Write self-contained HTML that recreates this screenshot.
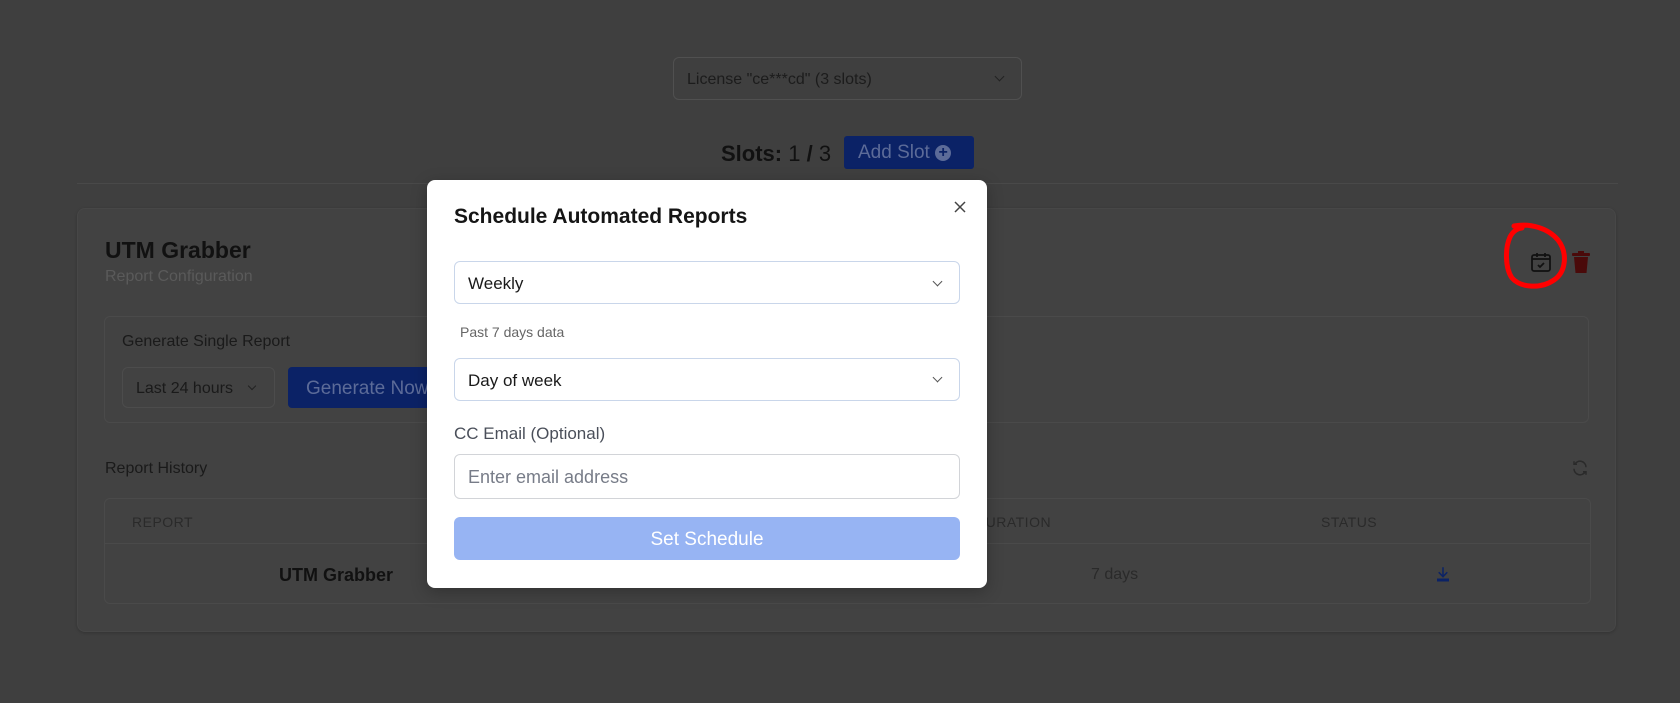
<!DOCTYPE html>
<html><head><meta charset="utf-8"><style>
*{box-sizing:border-box;margin:0;padding:0}
body{width:1680px;height:703px;background:#3f3f3f;font-family:"Liberation Sans",sans-serif;position:relative;overflow:hidden;color:#1a1a1a}
.a{position:absolute}
.sel{position:absolute;border:1px solid #4c4c4c;border-radius:6px}
.chev{position:absolute;width:7px;height:7px;border-right:1.5px solid;border-bottom:1.5px solid;transform:rotate(45deg)}
</style></head><body>
<div class="sel" style="left:673px;top:57px;width:349px;height:43px;border-color:#505050"></div>
<div class="a" style="left:687px;top:71px;font-size:16px;color:#1c1c1c">License "ce***cd" (3 slots)</div>
<div class="chev" style="left:996px;top:73px;color:#222"></div>
<div class="a" style="left:721px;top:141px;font-size:22px;color:#111"><b>Slots:</b> 1 <b>/</b> 3</div>
<div class="a" style="left:844px;top:136px;width:130px;height:33px;background:#0b2266;border-radius:3px;color:#5c6b98;font-size:19px;padding:6px 0 0 14px">Add Slot <span style="display:inline-block;width:16px;height:16px;border-radius:50%;background:#5c6b98;color:#0b2266;font-size:16px;line-height:16px;text-align:center;font-weight:bold;vertical-align:1px">+</span></div>
<div class="a" style="left:77px;top:183px;width:1541px;height:1px;background:#494949"></div>
<div class="a" style="left:77px;top:208px;width:1539px;height:424px;background:#424242;border:1px solid #474747;border-radius:8px;box-shadow:0 1px 3px rgba(0,0,0,.2)"></div>
<div class="a" style="left:105px;top:237px;font-size:23px;font-weight:bold;color:#111">UTM Grabber</div>
<div class="a" style="left:105px;top:268px;font-size:16px;color:#5a5a5a">Report Configuration</div>
<div class="a" style="left:104px;top:316px;width:1485px;height:107px;border:1px solid #4a4a4a;border-radius:6px"></div>
<div class="a" style="left:122px;top:333px;font-size:16px;color:#1a1a1a">Generate Single Report</div>
<div class="sel" style="left:122px;top:367px;width:153px;height:41px"></div>
<div class="a" style="left:136px;top:380px;font-size:16px;color:#1a1a1a">Last 24 hours</div>
<div class="chev" style="left:249px;top:383px;color:#222;width:6px;height:6px"></div>
<div class="a" style="left:288px;top:367px;width:150px;height:41px;background:#0b2266;border-radius:4px;color:#5c6b98;font-size:19px;padding:11px 0 0 18px">Generate Now</div>
<div class="a" style="left:105px;top:460px;font-size:16px;color:#1a1a1a">Report History</div>
<svg class="a" style="left:1571px;top:459px" width="18" height="18" viewBox="0 0 24 24" fill="none" stroke="#2a2a2a" stroke-width="2"><path d="M20 11A8 8 0 0 0 5 7M4 3v4h4M4 13a8 8 0 0 0 15 4M20 21v-4h-4"/></svg>
<div class="a" style="left:104px;top:498px;width:1487px;height:106px;border:1px solid #4a4a4a;border-radius:6px"></div>
<div class="a" style="left:104px;top:543px;width:1487px;height:1px;background:#4a4a4a"></div>
<div class="a" style="left:132px;top:514px;font-size:14px;color:#2a2a2a;letter-spacing:.5px">REPORT</div>
<div class="a" style="left:975px;top:514px;font-size:14px;color:#2a2a2a;letter-spacing:.5px">DURATION</div>
<div class="a" style="left:1321px;top:514px;font-size:14px;color:#2a2a2a;letter-spacing:.5px">STATUS</div>
<div class="a" style="left:279px;top:565px;font-size:18px;font-weight:bold;color:#111">UTM Grabber</div>
<div class="a" style="left:1091px;top:566px;font-size:16px;color:#2a2a2a">7 days</div>
<svg class="a" style="left:1434px;top:565px" width="18" height="18" viewBox="0 0 24 24" fill="#0b2266"><path d="M11 3h2v10l4-4 1.4 1.4L12 17l-6.4-6.6L7 9l4 4z"/><rect x="4" y="18" width="16" height="4"/></svg>
<svg class="a" style="left:1529px;top:250px" width="24" height="24" viewBox="0 0 24 24" fill="none" stroke="#111" stroke-width="1.8"><rect x="3" y="5" width="18" height="16" rx="2"/><path d="M3 9h18M8 3v4M16 3v4M9 15l2 2 4-4"/></svg>
<svg class="a" style="left:1570px;top:250px" width="22" height="24" viewBox="0 0 22 24" fill="#4a0a0a"><rect x="2" y="3" width="18" height="3" rx="1"/><rect x="8" y="1" width="6" height="3"/><path d="M4 7h14l-1.5 16h-11z"/></svg>
<svg class="a" style="left:1500px;top:218px" width="74" height="74" viewBox="0 0 74 74" fill="none" stroke="#ff0000" stroke-width="5" stroke-linecap="round"><path d="M14 8c16-3 34 2 44 14 10 13 8 32-4 40-13 9-33 8-42-2-7-10-7-30-2-41 3-6 8-9 12-9"/></svg>
<div class="a" style="left:427px;top:180px;width:560px;height:408px;background:#fff;border-radius:8px;box-shadow:0 4px 16px rgba(0,0,0,.25)"></div>
<div class="a" style="left:454px;top:205px;font-size:21px;font-weight:bold;color:#151515">Schedule Automated Reports</div>
<svg class="a" style="left:953px;top:200px" width="14" height="14" viewBox="0 0 14 14" stroke="#444" stroke-width="1.5"><path d="M2 2l10 10M12 2L2 12"/></svg>
<div class="sel" style="left:454px;top:261px;width:506px;height:43px;border-color:#c9d6ea;background:#fff"></div>
<div class="a" style="left:468px;top:274px;font-size:17px;color:#1a1a1a">Weekly</div>
<div class="chev" style="left:934px;top:278px;color:#555"></div>
<div class="a" style="left:460px;top:324px;font-size:14px;color:#666">Past 7 days data</div>
<div class="sel" style="left:454px;top:358px;width:506px;height:43px;border-color:#c9d6ea;background:#fff"></div>
<div class="a" style="left:468px;top:371px;font-size:17px;color:#1a1a1a">Day of week</div>
<div class="chev" style="left:934px;top:374px;color:#555"></div>
<div class="a" style="left:454px;top:424px;font-size:17px;color:#4a4f5a">CC Email (Optional)</div>
<div class="sel" style="left:454px;top:454px;width:506px;height:45px;border-color:#d2d4d8;background:#fff"></div>
<div class="a" style="left:468px;top:467px;font-size:18px;color:#777c88">Enter email address</div>
<div class="a" style="left:454px;top:517px;width:506px;height:43px;background:#97b4f3;border-radius:6px;color:#fff;font-size:19px;text-align:center;line-height:45px">Set Schedule</div>
</body></html>
